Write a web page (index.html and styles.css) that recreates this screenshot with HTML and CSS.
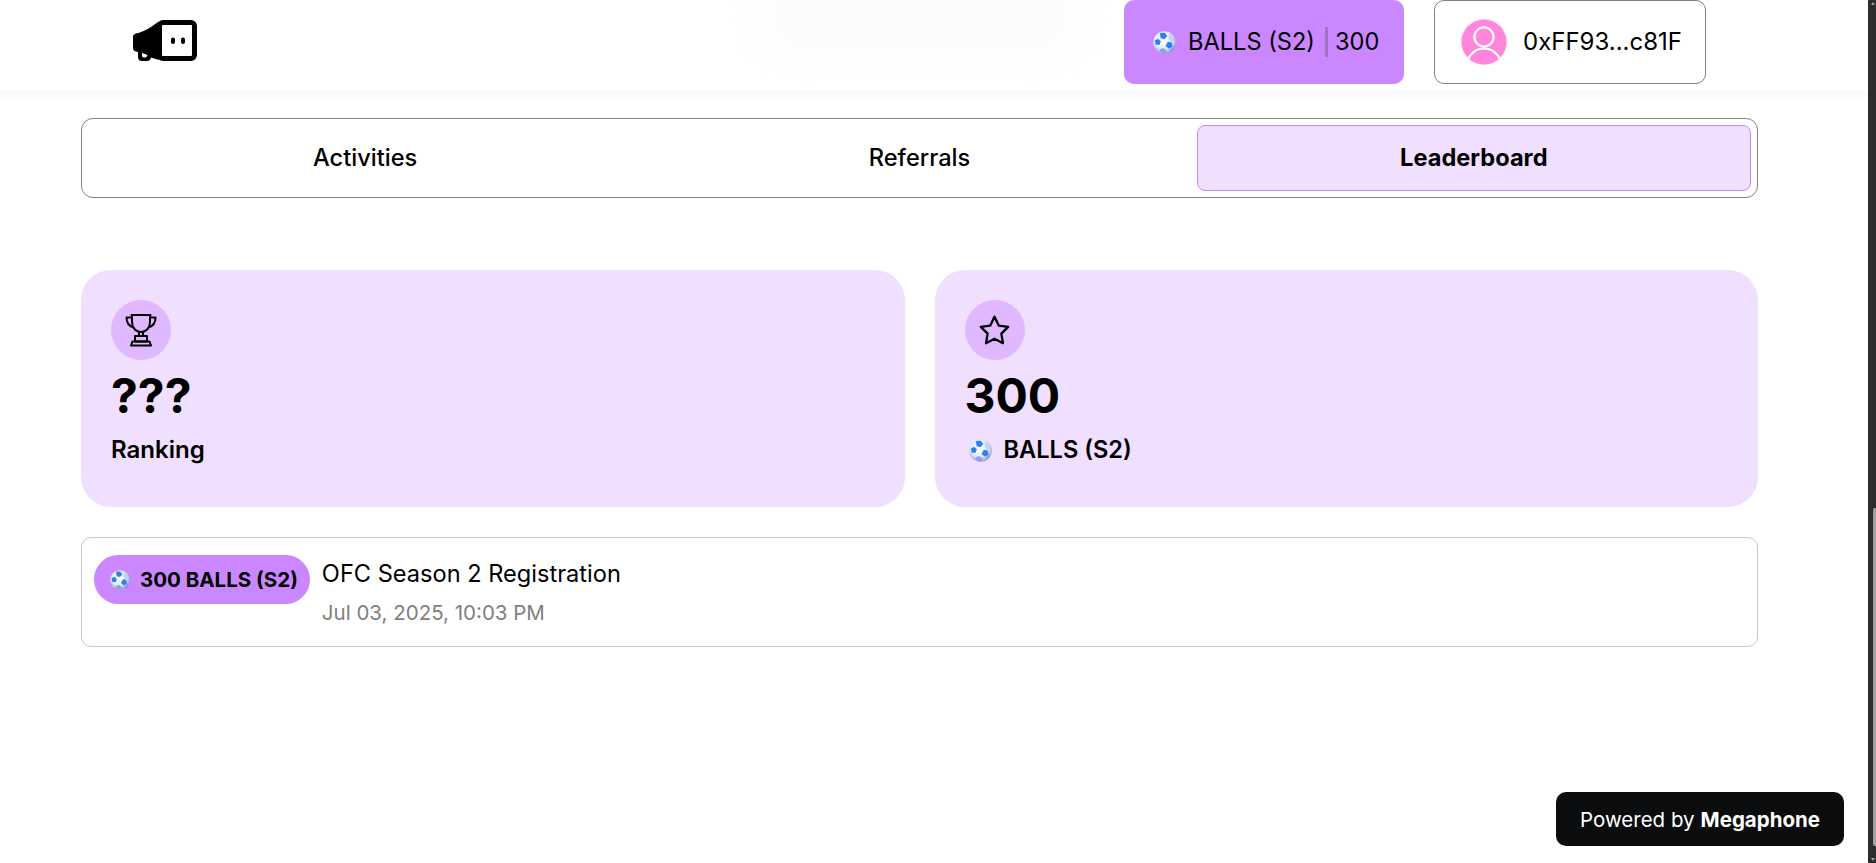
FILE: index.html
```html
<!doctype html>
<html lang="en">
    <head>
        <meta charset="UTF-8" />
        <meta name="viewport" content="width=device-width, initial-scale=1.0" />
        <title>Leaderboard</title>
        <link rel="stylesheet" href="styles.css">
    </head>
    <body>
        <svg class="defs" width="0" height="0">
            <defs>
                <radialGradient id="ball-fill" cx="0.45" cy="0.4" r="0.65">
                    <stop offset="0" stop-color="#ffffff" />
                    <stop offset="0.6" stop-color="#e4e9f8" />
                    <stop offset="1" stop-color="#8488cc" />
                </radialGradient>
                <symbol id="ball" viewBox="0 0 22 22">
                    <circle cx="11" cy="11" r="10.8" fill="url(#ball-fill)" />
                    <path d="M8 1 12.6 .9 15 4.2 12.2 7 8.8 6.2Z" fill="#2a82f0" transform="translate(-1.4 .8)" />
                    <path d="M15.6 2.6 19.4 5.4 20.6 9.6 17.6 10.6 14.8 7.4Z" fill="#c2d3f2" />
                    <path d="M1.8 9 5 7.4 7.4 9.8 6.4 13.2 2.6 13.2Z" fill="#2a82f0" />
                    <path d="M14.2 10.2 18 11 18.6 15 15.4 17 12 14.4Z" fill="#2a82f0" />
                    <path d="M6.4 17.2 10.4 16.6 12.8 19 11.6 21.4 7.4 21Z" fill="#8c9fec" />
                    <path d="M16.4 18.8 19.4 15.4 20.4 14.6 19 18 17 20Z" fill="#7c8fe6" />
                </symbol>
            </defs>
        </svg>

        <div class="app">
            <div class="page">
                <header class="topbar">
                    <div class="topbar-glow"></div>
                    <a class="logo" href="#" aria-label="Megaphone">
                        <svg width="64" height="41" viewBox="0 0 64 41">
                            <path d="M26 1.5 C21 4.5 14 11 3 13.5 C1 14 0 15 0 17 V28 C0 30 1 31 3 31.5 L5 32 V37 C5 39.5 6.5 41 9 41 H14 C16 41 17.5 40 18 37.5 L26 40Z" fill="#000" />
                            <path d="M9 33 L14.5 35 C14 37 13 37.5 11 37.5 C9.5 37.5 9 36.5 9 35Z" fill="#fff" />
                            <rect x="26.5" y="2.5" width="35" height="36" rx="3.5" fill="#fff" stroke="#000" stroke-width="5" />
                            <rect x="38" y="17.5" width="4" height="6.5" rx="2" fill="#000" />
                            <rect x="48" y="17.5" width="4" height="6.5" rx="2" fill="#000" />
                        </svg>
                    </a>
                    <div class="topbar-actions">
                        <button class="balance-btn">
                            <svg class="ball-icon"><use href="#ball" /></svg>
                            <span>BALLS (S2)</span>
                            <span class="divider"></span>
                            <span>300</span>
                        </button>
                        <button class="wallet-btn">
                            <svg class="avatar" width="48" height="48" viewBox="0 0 48 48">
                                <defs>
                                    <clipPath id="avatar-clip"><circle cx="24" cy="24" r="22.5" /></clipPath>
                                </defs>
                                <circle cx="24" cy="24" r="23.5" fill="#ffe9f8" />
                                <circle cx="24" cy="24" r="22.5" fill="#ff85dd" />
                                <g clip-path="url(#avatar-clip)" fill="none" stroke="#fff" stroke-width="2.2">
                                    <circle cx="24" cy="19" r="9.6" />
                                    <path d="M7 43 C11 34 17 30.5 24 30.5 C31 30.5 37 34 41 43" />
                                </g>
                            </svg>
                            <span>0xFF93...c81F</span>
                        </button>
                    </div>
                </header>

                <main class="content">
                    <nav class="tabs">
                        <a class="tab" href="#">Activities</a>
                        <a class="tab" href="#">Referrals</a>
                        <a class="tab tab-active" href="#">Leaderboard</a>
                    </nav>

                    <section class="stats">
                        <div class="stat-card">
                            <div class="stat-icon">
                                <svg width="32" height="34" viewBox="0 0 32 34" fill="none" stroke="#000" stroke-width="2" stroke-linejoin="round" stroke-linecap="round">
                                    <path d="M7 2 H25 V9 C25 15 21 19 16 19 C11 19 7 15 7 9Z" />
                                    <path d="M7 4.5 H1.5 C1.5 10 3.5 13 8.5 14.5" />
                                    <path d="M25 4.5 H30.5 C30.5 10 28.5 13 23.5 14.5" />
                                    <path d="M6.5 2 H25.5" />
                                    <path d="M14 19 V23 M18 19 V23" />
                                    <path d="M10 23 H22 V28.5 H10Z" />
                                    <path d="M7.5 28.5 H24.5 L26 32.5 H6Z" />
                                </svg>
                            </div>
                            <div class="stat-value">???</div>
                            <div class="stat-label">Ranking</div>
                        </div>
                        <div class="stat-card">
                            <div class="stat-icon">
                                <svg width="35" height="35" viewBox="0 0 24 24" fill="none" stroke="#000" stroke-width="1.6" stroke-linejoin="round" stroke-linecap="round">
                                    <path d="M12 2.6 14.9 8.6 21.4 9.5 16.7 14.1 17.8 20.7 12 17.6 6.2 20.7 7.3 14.1 2.6 9.5 9.1 8.6Z" />
                                </svg>
                            </div>
                            <div class="stat-value">300</div>
                            <div class="stat-label stat-label-token">
                                <svg class="ball-icon"><use href="#ball" /></svg>
                                <span>BALLS (S2)</span>
                            </div>
                        </div>
                    </section>

                    <section class="activity-row">
                        <div class="reward-pill">
                            <svg class="ball-icon ball-small"><use href="#ball" /></svg>
                            <span>300 BALLS (S2)</span>
                        </div>
                        <div class="activity-info">
                            <div class="activity-title">OFC Season 2 Registration</div>
                            <div class="activity-date">Jul 03, 2025, 10:03 PM</div>
                        </div>
                    </section>
                </main>

                <a class="powered" href="#">Powered by <b>Megaphone</b></a>
            </div>

            <div class="scrollbar">
                <div class="scroll-arrow"></div>
                <div class="scroll-thumb"></div>
                <div class="scroll-arrow scroll-arrow-down"></div>
            </div>
        </div>
    </body>
</html>
```

FILE: styles.css
```css
:root {
    --purple: #cb87ff;
    --purple-light: #f1dfff;
    --purple-mid: #e0b8ff;
    --line: #808080;
}

* {
    margin: 0;
    padding: 0;
    box-sizing: border-box;
}

html,
body {
    height: 100%;
    overflow: hidden;
}

body {
    font-family: Inter, "Liberation Sans", sans-serif;
    color: #000000;
    background-color: #ffffff;
}

a {
    color: inherit;
    text-decoration: none;
}

button {
    font: inherit;
    color: inherit;
    cursor: pointer;
}

.defs {
    position: absolute;
}

.app {
    display: flex;
    height: 100vh;
}

.page {
    flex: 1;
    position: relative;
    min-width: 0;
}

/* top bar */
.topbar {
    position: relative;
    display: flex;
    align-items: flex-start;
    justify-content: space-between;
    height: 91px;
    padding: 0 162px 0 133px;
    background-color: #ffffff;
    box-shadow: 0 3px 8px rgba(110, 110, 210, 0.08);
}

.topbar-glow {
    position: absolute;
    top: -30px;
    left: 765px;
    width: 310px;
    height: 85px;
    border-radius: 40px;
    background-color: #fcfcfc;
    filter: blur(14px);
}

.logo {
    position: relative;
    display: block;
    margin-top: 20px;
    height: 41px;
}

.topbar-actions {
    position: relative;
    display: flex;
    gap: 30px;
}

.balance-btn,
.wallet-btn {
    display: flex;
    align-items: center;
    height: 84px;
    border-radius: 10px;
    line-height: 1;
}

.balance-btn {
    width: 280px;
    padding-left: 29px;
    border: none;
    background-color: var(--purple);
    font-size: 23.6px;
}

.balance-btn .ball-icon {
    margin-right: 12px;
}

.divider {
    width: 3px;
    height: 30px;
    margin: 0 7px 0 10px;
    background-color: #9a74bd;
}

.wallet-btn {
    width: 272px;
    padding-left: 25px;
    gap: 15px;
    border: 1px solid var(--line);
    background-color: #ffffff;
    font-size: 24px;
}

.ball-icon {
    display: block;
    flex: none;
    width: 23px;
    height: 23px;
}

/* content */
.content {
    padding: 27px 110px 0 81px;
}

.tabs {
    display: grid;
    grid-template-columns: repeat(3, 1fr);
    height: 80px;
    padding: 6px;
    border: 1px solid var(--line);
    border-radius: 12px;
}

.tab {
    display: flex;
    align-items: center;
    justify-content: center;
    padding-bottom: 1px;
    border: 1px solid transparent;
    border-radius: 8px;
    font-size: 23.6px;
    font-weight: 500;
}

.tab-active {
    border-color: var(--purple);
    background-color: var(--purple-light);
    font-weight: 700;
}

.stats {
    display: grid;
    grid-template-columns: 1fr 1fr;
    gap: 30px;
    margin-top: 72px;
}

.stat-card {
    height: 237px;
    padding: 30px;
    border-radius: 30px;
    background-color: var(--purple-light);
}

.stat-icon {
    display: flex;
    align-items: center;
    justify-content: center;
    width: 60px;
    height: 60px;
    border-radius: 50%;
    background-color: var(--purple-mid);
}

.stat-value {
    font-size: 48px;
    font-weight: 700;
    line-height: 72px;
}

.stat-label {
    margin-top: 1px;
    font-size: 24px;
    font-weight: 600;
    line-height: 34px;
}

.stat-label-token {
    display: flex;
    align-items: center;
    gap: 12px;
    padding-left: 4px;
    font-size: 23.6px;
}

.activity-row {
    display: flex;
    align-items: flex-start;
    gap: 12px;
    height: 110px;
    margin-top: 30px;
    padding: 17px 12px;
    border: 1px solid #c8c8c8;
    border-radius: 10px;
}

.reward-pill {
    display: flex;
    align-items: center;
    gap: 10px;
    height: 49px;
    padding: 0 12px 0 16px;
    border-radius: 25px;
    background-color: var(--purple);
    font-size: 20.5px;
    font-weight: 700;
}

.ball-small {
    width: 20px;
    height: 20px;
}

.activity-title {
    font-size: 23.6px;
    line-height: 37px;
}

.activity-date {
    margin-top: 6px;
    font-size: 20.5px;
    line-height: 30px;
    color: var(--line);
}

.powered {
    position: absolute;
    right: 24px;
    bottom: 17px;
    display: flex;
    align-items: center;
    gap: 6px;
    height: 54px;
    padding: 0 24px;
    border-radius: 10px;
    background-color: #0a0c0e;
    color: #ffffff;
    font-size: 20.5px;
}

.powered b {
    font-weight: 700;
}

/* scrollbar */
.scrollbar {
    display: flex;
    flex-direction: column;
    flex: none;
    width: 8px;
    background-color: #2c2c2c;
}

.scroll-arrow {
    flex: none;
    width: 0;
    height: 0;
    margin: 2px 0 0 3px;
    border-left: 2.5px solid transparent;
    border-right: 2.5px solid transparent;
    border-bottom: 3px solid #a0a0a0;
}

.scroll-arrow-down {
    margin: auto 0 2px 3px;
    border-bottom: none;
    border-top: 3px solid #a0a0a0;
}

.scroll-thumb {
    flex: none;
    width: 3px;
    height: 338px;
    margin: 503px 0 0 5px;
    border-radius: 2px 0 0 2px;
    background-color: #a0a0a0;
}
```
